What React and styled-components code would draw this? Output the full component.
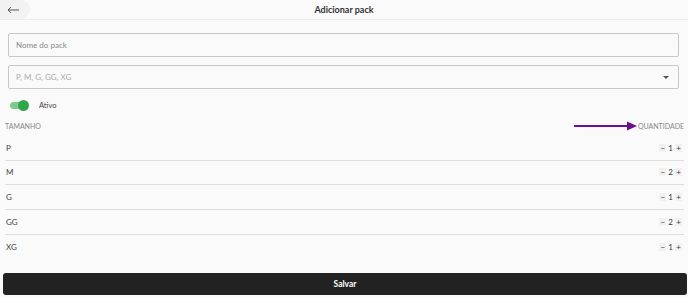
import styled, { createGlobalStyle } from "styled-components";

const Global = createGlobalStyle`
  html, body { margin: 0; padding: 0; background: #fafafa; }
  body { font-family: "Lato", "Liberation Sans", sans-serif; color: #333; }
  * { box-sizing: border-box; }
`;

const Page = styled.div`
  width: 688px;
  height: 297px;
  display: flex;
  flex-direction: column;
  background: #fafafa;
`;

const Header = styled.div`
  height: 20px;
  display: flex;
  align-items: center;
  border-bottom: 1px solid #ebebeb;
`;

const BackButton = styled.button`
  width: 30px;
  height: 19px;
  border: none;
  background: #f2f2f2;
  border-radius: 0 10px 10px 0;
  display: flex;
  align-items: center;
  justify-content: center;
  padding: 0 4px 0 0;
  cursor: pointer;
`;

const Title = styled.h1`
  flex: 1;
  margin: 0 30px 0 0;
  text-align: center;
  font-size: 9px;
  font-weight: 700;
  color: #333;
`;

const Form = styled.div`
  display: flex;
  flex-direction: column;
  padding: 13px 9px 0 8px;
  gap: 8px;
`;

const Field = styled.div`
  height: 24px;
  border: 1px solid #c8c8c8;
  border-radius: 2px;
  background: #fafafa;
  display: flex;
  align-items: center;
  justify-content: space-between;
  padding: 0 9px 0 7px;
  font-size: 8px;
  color: ${(p) => (p.$light ? "#aaa" : "#888")};
`;

const Caret = styled.span`
  width: 0;
  height: 0;
  border-left: 3px solid transparent;
  border-right: 3px solid transparent;
  border-top: 3px solid #555;
`;

const ToggleRow = styled.div`
  display: flex;
  align-items: center;
  gap: 11px;
  padding: 4px 0 0 2px;
  font-size: 7.5px;
  color: #444;
`;

const Switch = styled.div`
  width: 18px;
  height: 7px;
  border-radius: 4px;
  background: #7fc98a;
  position: relative;
  &::after {
    content: "";
    position: absolute;
    right: -1px;
    top: -2px;
    width: 11px;
    height: 11px;
    border-radius: 50%;
    background: #2fa64a;
  }
`;

const Table = styled.div`
  display: flex;
  flex-direction: column;
  padding: 11px 4px 0 5px;
`;

const HeadRow = styled.div`
  display: flex;
  align-items: center;
  justify-content: space-between;
  font-size: 7px;
  color: #888;
  text-transform: uppercase;
  height: 10px;
  margin-bottom: 5px;
`;

const QtyLabel = styled.div`
  display: flex;
  align-items: center;
  gap: 1px;
`;

const Row = styled.div`
  height: 24.67px;
  display: flex;
  align-items: center;
  justify-content: space-between;
  padding: 0 2px 0 1px;
  font-size: 8px;
  color: #444;
  border-bottom: ${(p) => (p.$last ? "none" : "1px solid #dedede")};
`;

const Counter = styled.div`
  display: flex;
  align-items: center;
  gap: 2px;
  font-size: 8px;
  color: #333;
`;

const Step = styled.span`
  display: inline-flex;
  align-items: center;
  justify-content: center;
  width: 7px;
  height: 8px;
  background: #f1f1f1;
  font-size: 8px;
  line-height: 1;
`;

const Footer = styled.div`
  margin-top: auto;
  padding: 0 1px 2px 3px;
`;

const SaveButton = styled.button`
  width: 100%;
  height: 22px;
  border: none;
  border-radius: 3px;
  background: #222;
  color: #fff;
  font-family: "Lato", "Liberation Sans", sans-serif;
  font-weight: 700;
  font-size: 8.5px;
  cursor: pointer;
`;

const sizes = [
  { s: "P", q: 1 },
  { s: "M", q: 2 },
  { s: "G", q: 1 },
  { s: "GG", q: 2 },
  { s: "XG", q: 1 },
];

export default function App() {
  return (
    <Page>
      <Global />
      <Header>
        <BackButton>
          <svg width="12" height="8" viewBox="0 0 12 8" fill="none" stroke="#555" strokeWidth="1">
            <path d="M12 4H1M4 1L1 4l3 3" />
          </svg>
        </BackButton>
        <Title>Adicionar pack</Title>
      </Header>
      <Form>
        <Field>Nome do pack</Field>
        <Field $light>
          P, M, G, GG, XG
          <Caret />
        </Field>
        <ToggleRow>
          <Switch />
          Ativo
        </ToggleRow>
      </Form>
      <Table>
        <HeadRow>
          <span>Tamanho</span>
          <QtyLabel>
            <svg width="63" height="10" viewBox="0 0 63 10">
              <path d="M0 5H54" stroke="#6b0f8c" strokeWidth="2" />
              <path d="M53 0.5L63 5L53 9.5Z" fill="#6b0f8c" />
            </svg>
            Quantidade
          </QtyLabel>
        </HeadRow>
        {sizes.map((r, i) => (
          <Row key={r.s} $last={i === sizes.length - 1}>
            {r.s}
            <Counter>
              <Step>−</Step>
              {r.q}
              <Step>+</Step>
            </Counter>
          </Row>
        ))}
      </Table>
      <Footer>
        <SaveButton>Salvar</SaveButton>
      </Footer>
    </Page>
  );
}
